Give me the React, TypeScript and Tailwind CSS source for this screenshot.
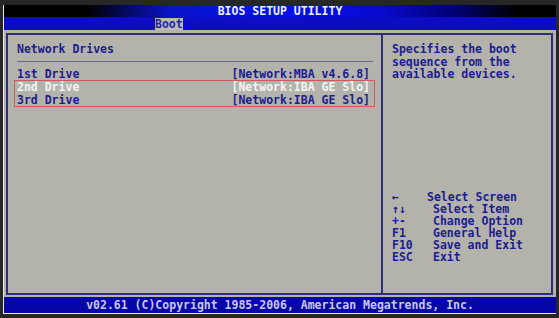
const font = "font-['DejaVu_Sans_Mono',monospace] font-bold text-[11.5px] leading-[12.5px]";

const drives = [
  { label: "1st Drive", value: "[Network:MBA v4.6.8]" },
  { label: "2nd Drive", value: "[Network:IBA GE Slo]", active: true },
  { label: "3rd Drive", value: "[Network:IBA GE Slo]" },
];

const keys = [
  { key: "←", desc: "Select Screen", shift: true },
  { key: "↑↓", desc: "Select Item" },
  { key: "+-", desc: "Change Option" },
  { key: "F1", desc: "General Help" },
  { key: "F10", desc: "Save and Exit" },
  { key: "ESC", desc: "Exit" },
];

function DriveRow({ label, value, active }: { label: string; value: string; active?: boolean }) {
  return (
    <div className={`flex h-[12.5px] items-center justify-between ${active ? "text-[#f4f4f4]" : "text-[#1c1c90]"}`}>
      <span>{label}</span>
      <span>{value}</span>
    </div>
  );
}

export default function App() {
  return (
    <div className={`h-[318px] w-[559px] overflow-hidden bg-[#272727] pl-[3px] pr-[3px] pt-[5px] ${font}`}>
      <div className="flex w-[553px] flex-col border-b border-l border-[#e8e8e8]">
        <div className="flex h-[12px] items-center justify-center bg-[linear-gradient(to_right,#000_0%,#000_15%,#0a14c8_30%,#0010f0_50%,#0a0ad0_68%,#000070_82%,#000_93%)] text-[#f0f0ff]">
          BIOS SETUP UTILITY
        </div>
        <div className="flex h-[13px] items-end bg-[#0c0cc4]">
          <div className="ml-[151px] h-[12px] bg-[#b9b9bb] text-[#2424a8]">Boot</div>
        </div>

        <div className="h-[267px] bg-[#b3b3ab] pb-[2px] pl-[2px] pr-[3px] pt-[3px]">
          <div className="flex h-full border-2 border-[#2e2e7c]">
            <div className="flex w-[373px] flex-col pt-[8px]">
              <div className="pl-[9px] text-[#1c1c90]">Network Drives</div>
              <div className="ml-[9px] mr-[8px] mt-[5px] h-px bg-[#6a6a88]" />
              <div className="mt-[6px] pl-[9px] pr-[11px]">
                <DriveRow {...drives[0]} />
              </div>
              <div className="ml-[6px] mr-[6px] border border-[#cf5a5a] pl-[2px] pr-[4px]">
                <DriveRow {...drives[1]} />
                <DriveRow {...drives[2]} />
              </div>
            </div>

            <div className="w-[2px] bg-[#2e2e7c]" />

            <div className="flex flex-1 flex-col pl-[9px] pt-[8px] text-[#1c1c90]">
              <div>Specifies the boot</div>
              <div>sequence from the</div>
              <div>available devices.</div>
              <div className="mt-[110px] flex flex-col leading-[12px]">
                {keys.map((k) => (
                  <div key={k.key} className="flex h-[12px] items-center">
                    <span className="w-[41px]">{k.key}</span>
                    <span className={k.shift ? "-ml-[6px]" : ""}>{k.desc}</span>
                  </div>
                ))}
              </div>
            </div>
          </div>
        </div>

        <div className="flex h-[16px] items-center justify-center bg-[#0606a8] text-[#c8c8e6]">
          v02.61 (C)Copyright 1985-2006, American Megatrends, Inc.
        </div>
      </div>
    </div>
  );
}
